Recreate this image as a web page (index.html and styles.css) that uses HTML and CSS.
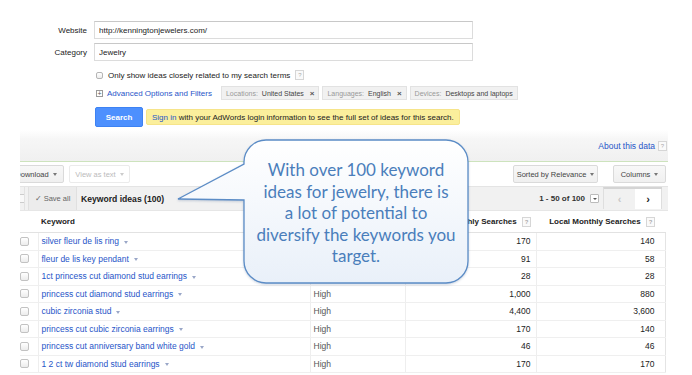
FILE: index.html
```html
<!DOCTYPE html>
<html lang="en">
<head>
  <meta charset="UTF-8">
  <meta name="viewport" content="width=device-width, initial-scale=1.0">
  <title>Keyword Planner</title>
  <link rel="stylesheet" href="styles.css">
</head>
<body>
  <div class="page">

    <!-- Formulari de cerca -->
    <form class="search-form">
      <div class="fields">
        <label class="field-label" for="websiteInput">Website</label>
        <input class="text-input" type="text" id="websiteInput" value="http://kenningtonjewelers.com/" readonly>
        <label class="field-label" for="categoryInput">Category</label>
        <input class="text-input" type="text" id="categoryInput" value="Jewelry" readonly>
      </div>

      <div class="options">
        <div class="check-row">
          <span class="checkbox"></span>
          <span>Only show ideas closely related to my search terms</span>
          <span class="help">?</span>
        </div>

        <div class="advanced-row">
          <span class="plus-icon">+</span>
          <a class="link advanced-link">Advanced Options and Filters</a>
          <span class="chip"><span class="chip-label">Locations:</span> United States <b class="chip-x">&#215;</b></span>
          <span class="chip"><span class="chip-label">Languages:</span> English <b class="chip-x">&#215;</b></span>
          <span class="chip"><span class="chip-label">Devices:</span> Desktops and laptops</span>
        </div>

        <div class="search-row">
          <button type="button" class="search-btn">Search</button>
          <div class="notice"><a class="link">Sign in</a> with your AdWords login information to see the full set of ideas for this search.</div>
        </div>
      </div>
    </form>

    <!-- Resultats -->
    <div class="results">
      <div class="results-band">
        <a class="link">About this data</a>
        <span class="help">?</span>
      </div>

      <div class="toolbar">
        <div class="toolbar-left">
          <span class="tool-btn download-btn">Download <i class="caret"></i></span>
          <span class="tool-btn disabled">View as text <i class="caret light"></i></span>
        </div>
        <div class="toolbar-right">
          <span class="tool-btn sort-btn">Sorted by Relevance <i class="caret"></i></span>
          <span class="tool-btn columns-btn">Columns <i class="caret"></i></span>
        </div>
      </div>

      <div class="ideas-bar">
        <div class="ideas-left">
          <span class="select-stub"><span class="stub-box"></span></span>
          <span class="save-btn">&#10003; Save all</span>
          <span class="ideas-title">Keyword ideas (100)</span>
        </div>
        <div class="ideas-right">
          <span class="range">1 - 50 of 100</span>
          <span class="range-menu"><i class="caret"></i></span>
          <div class="pager">
            <span class="pager-prev">&#8249;</span>
            <span class="pager-next">&#8250;</span>
          </div>
        </div>
      </div>

      <table class="ideas-table">
        <colgroup>
          <col class="col-check">
          <col class="col-keyword">
          <col class="col-comp">
          <col class="col-global">
          <col class="col-local">
        </colgroup>
        <thead>
          <tr>
            <th></th>
            <th class="left">Keyword</th>
            <th></th>
            <th class="num global">Global Monthly Searches <span class="help">?</span></th>
            <th class="num local">Local Monthly Searches <span class="help">?</span></th>
          </tr>
        </thead>
        <tbody>
          <tr><td><span class="row-check"></span></td><td><a class="link">silver fleur de lis ring</a><i class="caret"></i></td><td>High</td><td class="num global">170</td><td class="num local">140</td></tr>
          <tr><td><span class="row-check"></span></td><td><a class="link">fleur de lis key pendant</a><i class="caret"></i></td><td>High</td><td class="num global">91</td><td class="num local">58</td></tr>
          <tr><td><span class="row-check"></span></td><td><a class="link">1ct princess cut diamond stud earrings</a><i class="caret"></i></td><td>High</td><td class="num global">28</td><td class="num local">28</td></tr>
          <tr><td><span class="row-check"></span></td><td><a class="link">princess cut diamond stud earrings</a><i class="caret"></i></td><td>High</td><td class="num global">1,000</td><td class="num local">880</td></tr>
          <tr><td><span class="row-check"></span></td><td><a class="link">cubic zirconia stud</a><i class="caret"></i></td><td>High</td><td class="num global">4,400</td><td class="num local">3,600</td></tr>
          <tr><td><span class="row-check"></span></td><td><a class="link">princess cut cubic zirconia earrings</a><i class="caret"></i></td><td>High</td><td class="num global">170</td><td class="num local">140</td></tr>
          <tr><td><span class="row-check"></span></td><td><a class="link">princess cut anniversary band white gold</a><i class="caret"></i></td><td>High</td><td class="num global">46</td><td class="num local">46</td></tr>
          <tr><td><span class="row-check"></span></td><td><a class="link">1 2 ct tw diamond stud earrings</a><i class="caret"></i></td><td>High</td><td class="num global">170</td><td class="num local">170</td></tr>
        </tbody>
      </table>
    </div>

    <!-- Bafarada explicativa -->
    <div class="callout">
      <svg class="callout-shape" width="296" height="150" viewBox="0 0 296 150">
        <defs>
          <linearGradient id="calloutFill" x1="0" y1="0" x2="0" y2="1">
            <stop offset="0" stop-color="#ffffff"/>
            <stop offset="1" stop-color="#e9f0f9"/>
          </linearGradient>
        </defs>
        <path d="M90,2 H270 A22,22 0 0 1 292,24 V123 A22,22 0 0 1 270,145 H90 A22,22 0 0 1 68,123 V62 L2,61 L68,26 V24 A22,22 0 0 1 90,2 Z"
              fill="url(#calloutFill)" stroke="#5b8cc6" stroke-width="1.3"/>
      </svg>
      <p class="callout-text">With over 100 keyword<br>ideas for jewelry, there is<br>a lot of potential to<br>diversify the keywords you<br>target.</p>
    </div>

  </div>
</body>
</html>
```

FILE: styles.css
```css
body {
  margin: 0;
  background-color: #ffffff;
  font-family: "Liberation Sans", Arial, sans-serif;
  font-size: 8px;
  color: #222;
}

.page {
  position: relative;
  width: 692px;
  height: 375px;
  overflow: hidden;
}

.link {
  color: #1f55c8;
  text-decoration: none;
}

.help {
  display: inline-block;
  width: 7px;
  height: 8px;
  line-height: 8px;
  border: 1px solid #d6d6d6;
  color: #aaa;
  font-size: 6px;
  text-align: center;
  vertical-align: middle;
  background-color: #fafafa;
}

/* ---------- formulari ---------- */

.search-form {
  margin: 0;
  padding-top: 21px;
}

.fields {
  display: grid;
  grid-template-columns: 87px 379px;
  column-gap: 7px;
  row-gap: 4px;
}

.field-label {
  text-align: right;
  align-self: center;
  font-size: 8px;
  color: #222;
}

.text-input {
  box-sizing: border-box;
  width: 100%;
  height: 18px;
  margin: 0;
  padding: 0 4px;
  border: 1px solid #dcdcdc;
  border-top-color: #c8c8c8;
  border-radius: 0;
  font-family: "Liberation Sans", Arial, sans-serif;
  font-size: 8px;
  color: #222;
  background-color: #fff;
  outline: none;
}

.options {
  padding-left: 94px;
}

.check-row {
  display: flex;
  align-items: center;
  gap: 5px;
  height: 12px;
  margin-top: 8px;
  color: #222;
}

.checkbox {
  width: 7px;
  height: 7px;
  margin-left: 2px;
  border: 1px solid #b5b5b5;
  border-radius: 2px;
  box-sizing: border-box;
  background: linear-gradient(#ffffff, #ededed);
}

.advanced-row {
  display: flex;
  align-items: center;
  height: 14px;
  margin-top: 5px;
}

.plus-icon {
  box-sizing: border-box;
  width: 7px;
  height: 7px;
  margin-left: 2px;
  border: 1px solid #9a9a9a;
  font-size: 7px;
  line-height: 5px;
  text-align: center;
  color: #555;
}

.advanced-link {
  margin-left: 4px;
  margin-right: 9px;
}

.chip {
  display: inline-flex;
  align-items: center;
  gap: 2px;
  height: 14px;
  padding: 0 4px;
  margin-right: 3px;
  box-sizing: border-box;
  border: 1px solid #e2e2e2;
  background-color: #f1f1f1;
  font-size: 7px;
  color: #444;
  white-space: pre;
}

.chip-label {
  color: #999;
}

.chip-x {
  margin-left: 2px;
  color: #555;
  font-size: 8px;
}

.search-row {
  display: flex;
  align-items: center;
  gap: 3px;
  height: 20px;
  margin-top: 7px;
}

.search-btn {
  width: 48px;
  height: 20px;
  margin-left: 1px;
  padding: 0;
  border: 1px solid #3d82f3;
  border-radius: 2px;
  background-color: #4d90fe;
  color: #fff;
  font-family: "Liberation Sans", Arial, sans-serif;
  font-size: 8px;
  font-weight: bold;
}

.notice {
  height: 16px;
  line-height: 16px;
  padding: 0 5px;
  box-sizing: border-box;
  border: 1px solid #f6e48a;
  border-radius: 2px;
  background-color: #fbef9c;
  color: #222;
  font-size: 8px;
  white-space: nowrap;
}

/* ---------- resultats ---------- */

.results {
  width: 648px;
  margin-top: 3px;
  margin-left: 20px;
  overflow: hidden;
}

.results-band {
  display: flex;
  justify-content: flex-end;
  align-items: center;
  gap: 3px;
  height: 31px;
  padding-right: 1px;
  background: linear-gradient(#ffffff, #f6f6f6 30%, #f0f0f0);
  border-bottom: 1px solid #cde3bd;
  font-size: 8.5px;
}

.toolbar {
  display: flex;
  justify-content: space-between;
  align-items: center;
  height: 24px;
}

.toolbar-left,
.toolbar-right {
  display: flex;
  align-items: center;
}

.tool-btn {
  display: inline-flex;
  align-items: center;
  justify-content: center;
  gap: 4px;
  height: 18px;
  box-sizing: border-box;
  border: 1px solid #dadada;
  border-radius: 2px;
  background: linear-gradient(#f8f8f8, #f0f0f0);
  color: #444;
  font-size: 7.5px;
}

.download-btn {
  width: 56px;
  margin-left: -12px;
}

.tool-btn.disabled {
  width: 61px;
  margin-left: 5px;
  background: #fff;
  border-color: #ebebeb;
  color: #bbb;
}

.sort-btn {
  width: 85px;
}

.columns-btn {
  width: 53px;
  margin-left: 15px;
  margin-right: 2px;
}

.caret {
  display: inline-block;
  width: 0;
  height: 0;
  border-left: 2.5px solid transparent;
  border-right: 2.5px solid transparent;
  border-top: 3px solid #777;
}

.caret.light {
  border-top-color: #ccc;
}

.ideas-bar {
  display: flex;
  justify-content: space-between;
  align-items: center;
  height: 25px;
  box-sizing: border-box;
  border-top: 1px solid #e4e4e4;
  border-bottom: 1px solid #e6e6e6;
  background-color: #f1f1f1;
}

.ideas-left,
.ideas-right {
  display: flex;
  align-items: center;
  height: 100%;
}

.select-stub {
  display: flex;
  align-items: center;
  width: 4px;
  height: 100%;
  overflow: hidden;
  border-right: 1px solid #e2e2e2;
}

.stub-box {
  flex: none;
  width: 7px;
  height: 7px;
  margin-left: -4px;
  border: 1px solid #ccc;
  background-color: #f8f8f8;
}

.save-btn {
  display: flex;
  align-items: center;
  justify-content: center;
  width: 49px;
  height: 100%;
  margin-left: 3px;
  box-sizing: border-box;
  border-left: 1px solid #e0e0e0;
  border-right: 1px solid #e0e0e0;
  background-color: #ececec;
  color: #666;
  font-size: 7.5px;
}

.ideas-title {
  margin-left: 4px;
  font-size: 8.6px;
  font-weight: bold;
  color: #222;
}

.range {
  font-size: 8px;
  font-weight: bold;
  color: #333;
}

.range-menu {
  display: flex;
  align-items: center;
  justify-content: center;
  width: 9px;
  height: 9px;
  margin-left: 5px;
  box-sizing: border-box;
  border: 1px solid #bbb;
  border-radius: 1px;
  background-color: #fff;
}

.range-menu .caret {
  border-left-width: 2px;
  border-right-width: 2px;
  border-top-width: 2.5px;
  border-top-color: #555;
}

.pager {
  display: flex;
  height: 22px;
  margin-left: 4px;
  margin-right: 6px;
  border-left: 1px solid #dedede;
  border-top: 2px solid #d4d4d4;
  box-sizing: border-box;
  align-self: flex-start;
}

.pager span {
  display: flex;
  align-items: center;
  justify-content: center;
  height: 100%;
  font-size: 11px;
  font-weight: bold;
}

.pager-prev {
  width: 31px;
  color: #c8c8c8;
}

.pager-next {
  width: 26px;
  background-color: #fff;
  color: #222;
  border-right: 1px solid #dedede;
}

.ideas-table {
  width: 645px;
  border-collapse: collapse;
  table-layout: fixed;
  font-size: 8.5px;
}

.col-check { width: 18px; }
.col-keyword { width: 272px; }
.col-comp { width: 95px; }
.col-global { width: 131px; }
.col-local { width: 129px; }

.ideas-table th {
  height: 21px;
  padding: 0;
  font-size: 8px;
  font-weight: bold;
  color: #222;
  border-bottom: 1px solid #e2e2e2;
  white-space: nowrap;
}

.ideas-table th.left {
  text-align: left;
  padding-left: 3px;
}

.ideas-table td {
  height: 16.5px;
  padding: 0;
  border-bottom: 1px solid #efefef;
  border-left: 1px solid #eeeeee;
  color: #555;
  white-space: nowrap;
}

.ideas-table td:first-child {
  border-left: none;
}

.ideas-table td:last-child {
  border-right: 1px solid #e4e4e4;
}

.ideas-table td:nth-child(2) {
  padding-left: 3px;
}

.ideas-table td:nth-child(3) {
  padding-left: 3px;
}

.ideas-table td .caret {
  margin-left: 5px;
  vertical-align: middle;
  border-top-color: #9aa7c8;
}

.ideas-table .num {
  text-align: right;
  color: #222;
}

.ideas-table .num.global {
  padding-right: 5px;
}

.ideas-table .num.local {
  padding-right: 10px;
}

.ideas-table th .help {
  margin-left: 3px;
}

.row-check {
  display: block;
  width: 7px;
  height: 7px;
  border: 1px solid #c2c2c2;
  border-radius: 2px;
  background: linear-gradient(#ffffff, #ececec);
}

/* ---------- bafarada ---------- */

.callout {
  position: absolute;
  left: 176px;
  top: 138px;
  width: 296px;
  height: 150px;
}

.callout-shape {
  position: absolute;
  left: 0;
  top: 0;
  filter: drop-shadow(0 1px 1px rgba(60, 90, 140, 0.25));
}

.callout-text {
  position: absolute;
  left: 68px;
  top: 21px;
  width: 224px;
  margin: 0;
  font-family: Lato, "Open Sans", sans-serif;
  font-size: 17px;
  line-height: 21.5px;
  text-align: center;
  color: #4a7ebb;
}
```
